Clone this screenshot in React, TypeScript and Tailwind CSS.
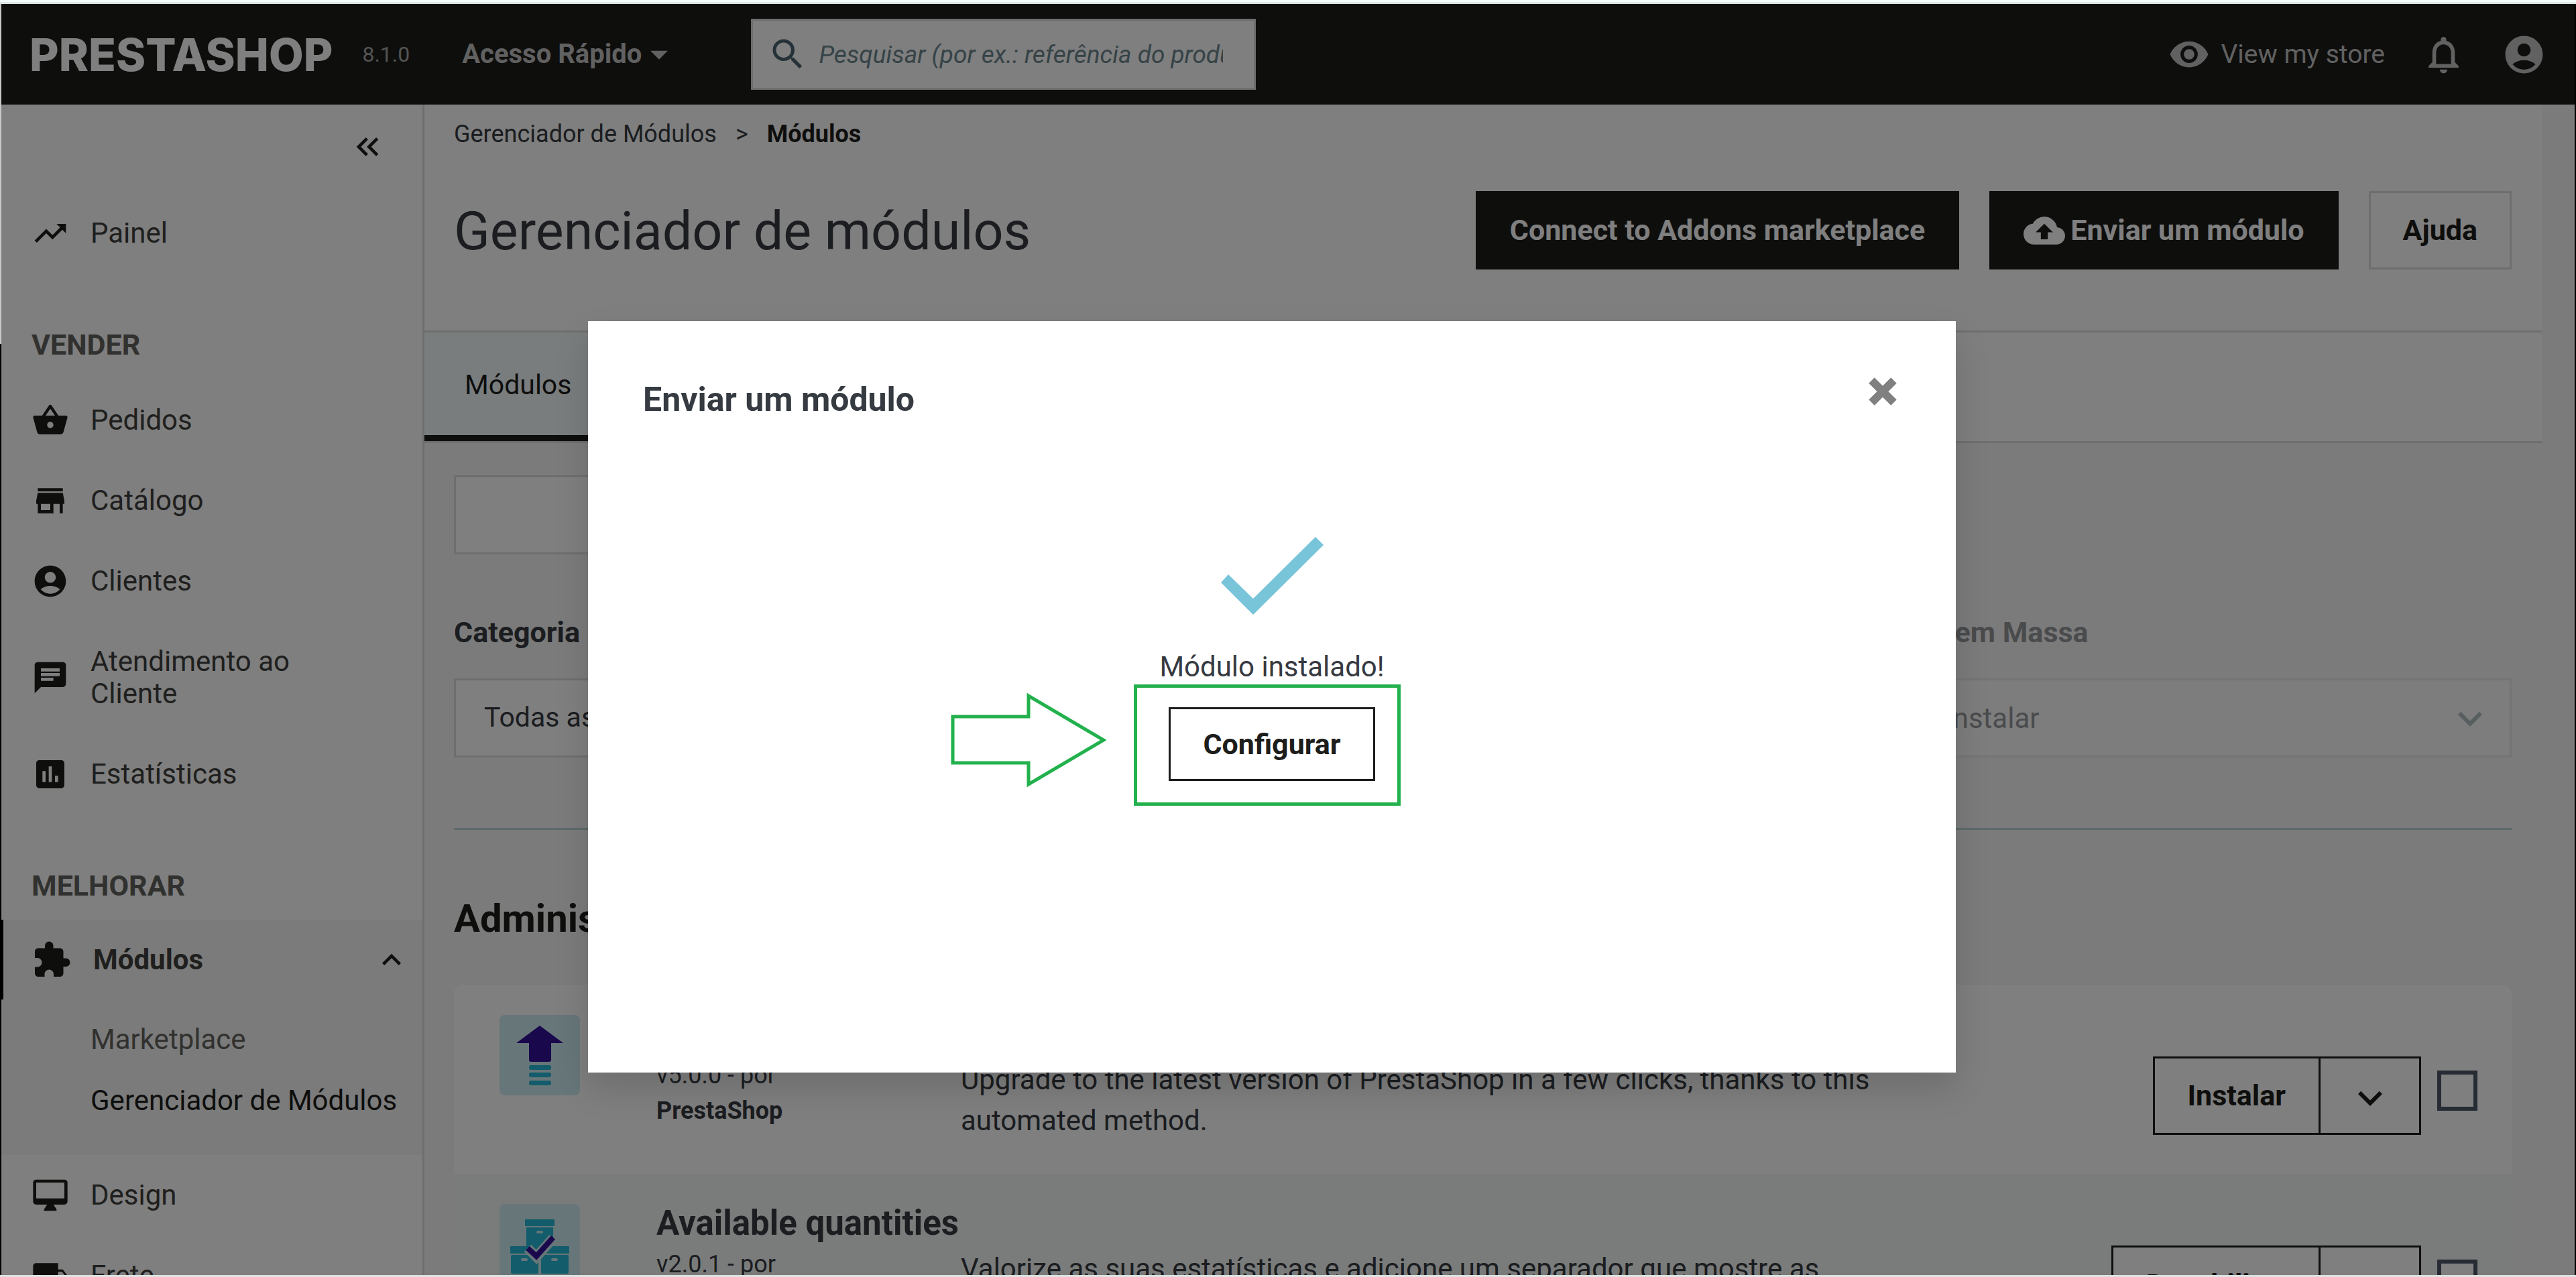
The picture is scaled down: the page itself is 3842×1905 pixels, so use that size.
import type { ReactNode } from "react";
import {
  MdAccountCircle,
  MdArrowDropDown,
  MdAssessment,
  MdChat,
  MdCloudUpload,
  MdExtension,
  MdKeyboardArrowDown,
  MdKeyboardArrowUp,
  MdKeyboardDoubleArrowLeft,
  MdLocalShipping,
  MdNotificationsNone,
  MdSearch,
  MdShoppingBasket,
  MdStore,
  MdTrendingUp,
  MdVisibility,
} from "react-icons/md";

type IconComponent = (props: { className?: string }) => ReactNode;

function Header() {
  return (
    <header className="flex h-[150px] shrink-0 items-center bg-[#1d1d1b] pl-[42px] pr-[42px] text-[#c2c2c2]">
      <a href="#inicio" className="font-[Inter] text-[67px] leading-none font-extrabold text-white">
        PRESTASHOP
      </a>
      <span className="ml-[44px] text-[32px] text-[#a8a8a8]">8.1.0</span>
      <button className="ml-[78px] flex items-center text-[40px] font-bold">
        Acesso Rápido
        <MdArrowDropDown className="-ml-[5px] size-[62px]" />
      </button>
      <div className="ml-[106px] flex h-[106px] w-[753px] items-center border-[3px] border-[#dddddd] bg-white pl-[22px] pr-[46px]">
        <MdSearch className="size-[60px] shrink-0 text-[#4b6570]" />
        <input
          aria-label="Pesquisar"
          placeholder="Pesquisar (por ex.: referência do produto, nome do cliente...)"
          className="ml-[16px] h-full min-w-0 flex-1 text-[37px] italic outline-none placeholder:text-[#6c868e]"
        />
      </div>
      <a href="#loja" className="ml-auto flex items-center gap-[16px] text-[39px]">
        <MdVisibility className="size-[62px]" />
        View my store
      </a>
      <button aria-label="Notificações" className="ml-[54px]">
        <MdNotificationsNone className="size-[67px]" />
      </button>
      <button aria-label="Conta" className="ml-[53px]">
        <MdAccountCircle className="size-[67px]" />
      </button>
    </header>
  );
}

function DesktopIcon({ className }: { className?: string }) {
  return (
    <svg viewBox="0 0 24 24" fill="currentColor" className={className}>
      <path d="M21 2H3c-1.1 0-2 .9-2 2v12c0 1.1.9 2 2 2h7l-2 3v1h8v-1l-2-3h7c1.1 0 2-.9 2-2V4c0-1.1-.9-2-2-2zm0 12H3V4h18v10z" />
    </svg>
  );
}

function NavItem({ icon: Icon, children }: { icon: IconComponent; children: ReactNode }) {
  return (
    <a href="#menu" className="flex items-center gap-[32px] py-[36px] pr-[120px] pl-[45px] text-[42px] leading-[48px] text-[#3f3f3d]">
      <Icon className="-my-[4px] size-[56px] shrink-0 text-[#1d1d1b]" />
      <span>{children}</span>
    </a>
  );
}

function NavTitle({ children }: { children: ReactNode }) {
  return <h2 className="pl-[45px] text-[43px] leading-[48px] font-bold text-[#63635f]">{children}</h2>;
}

function Sidebar() {
  return (
    <nav className="w-[631px] shrink-0 border-r-[3px] border-[#dddddd] bg-white">
      <div className="flex justify-end pt-[35px] pr-[54px]">
        <button aria-label="Recolher menu">
          <MdKeyboardDoubleArrowLeft className="size-[56px] text-[#1d1d1b]" />
        </button>
      </div>
      <div className="mt-[41px]">
        <NavItem icon={MdTrendingUp}>Painel</NavItem>
      </div>
      <div className="mt-[82px] mb-[29px]">
        <NavTitle>VENDER</NavTitle>
      </div>
      <NavItem icon={MdShoppingBasket}>Pedidos</NavItem>
      <NavItem icon={MdStore}>Catálogo</NavItem>
      <NavItem icon={MdAccountCircle}>Clientes</NavItem>
      <NavItem icon={MdChat}>Atendimento ao Cliente</NavItem>
      <NavItem icon={MdAssessment}>Estatísticas</NavItem>
      <div className="mt-[82px] mb-[27px]">
        <NavTitle>MELHORAR</NavTitle>
      </div>
      <div className="bg-[#f6f6f6] pb-[36px]">
        <a
          href="#modulos"
          className="flex h-[119px] items-center border-l-[3px] border-black pr-[18px] pl-[42px] text-[42px] font-bold text-[#3f3f3d]"
        >
          <MdExtension className="mr-[32px] size-[60px] text-[#1d1d1b]" />
          Módulos
          <MdKeyboardArrowUp className="ml-auto size-[56px] text-[#1d1d1b]" />
        </a>
        <a href="#marketplace" className="mt-[14px] block pl-[133px] text-[42px] leading-[91px] text-[#63635f]">
          Marketplace
        </a>
        <a href="#gerenciador" className="block pl-[133px] text-[42px] leading-[91px] whitespace-nowrap text-[#1d1d1b]">
          Gerenciador de Módulos
        </a>
      </div>
      <NavItem icon={DesktopIcon}>Design</NavItem>
      <NavItem icon={MdLocalShipping}>Frete</NavItem>
    </nav>
  );
}

function PageHeader() {
  return (
    <div className="mr-[49px] border-b-[3px] border-[#dddddd] bg-white text-[#363a41]">
      <div className="border-b-[3px] border-[#dddddd] pr-[45px] pb-[91px] pl-[44px]">
        <ol className="flex gap-[28px] pt-[20px] text-[36px] leading-[48px]">
          <li>
            <a href="#gerenciador">Gerenciador de Módulos</a>
          </li>
          <li aria-hidden="true">&gt;</li>
          <li className="font-bold text-[#1d1d1b]">Módulos</li>
        </ol>
        <div className="mt-[61px] flex items-center gap-[45px]">
          <h1 className="mr-auto pt-[3px] text-[79px] leading-[114px]">Gerenciador de módulos</h1>
          <button className="h-[117px] bg-[#1d1d1b] px-[51px] text-[43px] font-bold text-white">
            Connect to Addons marketplace
          </button>
          <button className="flex h-[117px] items-center gap-[8px] bg-[#1d1d1b] px-[51px] text-[43px] font-bold text-white">
            <MdCloudUpload className="size-[62px]" />
            Enviar um módulo
          </button>
          <button className="h-[117px] border-[3px] border-[#dddddd] px-[48px] text-[43px] font-bold text-[#1d1d1b]">
            Ajuda
          </button>
        </div>
      </div>
      <div className="flex">
        <a href="#modulos" className="h-[162px] border-b-[9px] border-[#1d1d1b] bg-[#f3fbfd] px-[60px] text-[41px] leading-[156px] text-[#1d1d1b]">
          Módulos
        </a>
      </div>
    </div>
  );
}

function UpgradeIcon() {
  return (
    <svg viewBox="0 0 120 120" className="size-[120px]">
      <rect width="120" height="120" rx="8" fill="#ceecf3" />
      <path d="M60 16 95 42H77V67q0 3-3 3H47q-3 0-3-3V42H25z" fill="#34119b" />
      <g fill="#25b9d7">
        <rect x="44" y="75" width="33" height="7" rx="3" />
        <rect x="44" y="86" width="33" height="7" rx="3" />
        <rect x="44" y="98" width="33" height="7" rx="3" />
      </g>
    </svg>
  );
}

function QuantitiesIcon() {
  return (
    <svg viewBox="0 0 120 120" className="size-[120px]">
      <rect width="120" height="120" rx="8" fill="#ceecf3" />
      <g fill="#25b9d7">
        <rect x="38" y="23" width="44" height="10" rx="1" />
        <path d="M40 35h40v28H40z" />
        <rect x="16" y="63" width="88" height="11" rx="1" />
        <rect x="17" y="76" width="41" height="28" rx="2" />
        <rect x="62" y="76" width="41" height="28" rx="2" />
      </g>
      <g fill="#ceecf3">
        <rect x="55" y="40" width="10" height="4" rx="2" />
        <rect x="32" y="81" width="10" height="4" rx="2" />
        <rect x="77" y="81" width="10" height="4" rx="2" />
      </g>
      <path d="m42 66 13 13 25-28" fill="none" stroke="#ceecf3" strokeWidth="15" />
      <path d="m42 66 13 12 25-28" fill="none" stroke="#34119b" strokeWidth="8" />
    </svg>
  );
}

interface ModuleProps {
  icon: ReactNode;
  name: string;
  version: string;
  description: ReactNode;
  action: string;
  tone: string;
}

function ModuleCard({ icon, name, version, description, action, tone }: ModuleProps) {
  return (
    <article className={`flex h-[282px] items-start pr-[51px] pl-[68px] text-[#363a41] ${tone}`}>
      <div className="mt-[45px] mr-[114px] shrink-0">{icon}</div>
      <div className="w-[454px] shrink-0 pt-[44px]">
        <h3 className="text-[51px] leading-[60px] font-bold whitespace-nowrap">{name}</h3>
        <p className="mt-[5px] text-[36px] leading-[53px]">
          {version} - por
          <br />
          <b>PrestaShop</b>
        </p>
      </div>
      <p className="w-[1420px] pt-[111px] text-[42px] leading-[61px]">{description}</p>
      <div className="mt-[107px] ml-auto flex h-[117px] border-[3px] border-[#1d1d1b] bg-white text-[#1d1d1b]">
        <button className="border-r-[3px] border-[#1d1d1b] px-[49px] text-[43px] font-bold">{action}</button>
        <button aria-label={`Mais ações de ${name}`} className="w-[147px]">
          <MdKeyboardArrowDown className="mx-auto mt-[6px] size-[72px]" />
        </button>
      </div>
      <input
        type="checkbox"
        aria-label={`Selecionar ${name}`}
        className="mt-[128px] ml-[24px] size-[60px] shrink-0 appearance-none border-[6px] border-[#4e5666] bg-white"
      />
    </article>
  );
}

function Content() {
  return (
    <div className="pr-[94px] pl-[44px] text-[#363a41]">
      <input
        aria-label="Pesquisar módulos"
        className="mt-[48px] block h-[118px] w-2/3 border-[3px] border-[#dddddd] bg-white px-[46px] text-[41px]"
      />
      <div className="mt-[85px] flex">
        <div className="flex-1">
          <label htmlFor="categoria" className="block text-[43px] leading-[62px] font-bold">
            Categoria
          </label>
          <select
            id="categoria"
            className="mt-[38px] block h-[118px] w-[900px] appearance-none border-[3px] border-[#dddddd] bg-white px-[42px] text-[41px]"
          >
            <option>Todas as categorias</option>
          </select>
        </div>
        <div className="w-[962px] opacity-50">
          <label htmlFor="massa" className="block text-[43px] leading-[62px] font-bold">
            Ações em Massa
          </label>
          <div className="relative mt-[38px]">
            <select
              id="massa"
              disabled
              className="block h-[118px] w-full appearance-none border-[3px] border-[#dddddd] bg-white px-[44px] text-[42px] opacity-100"
            >
              <option>Desinstalar</option>
            </select>
            <MdKeyboardArrowDown className="pointer-events-none absolute top-[24px] right-[26px] size-[72px] text-[#6c868e]" />
          </div>
        </div>
      </div>
      <div role="separator" className="mt-[105px] h-[3px] bg-[#bad4d6]" />
      <h2 className="mt-[92px] text-[58px] leading-[80px] font-bold text-[#1d1d1b]">Administração</h2>
      <div className="mt-[59px] overflow-hidden rounded-t-[14px]">
        <ModuleCard
          icon={<UpgradeIcon />}
          name="1-Click Upgrade"
          version="v5.0.0"
          description="Upgrade to the latest version of PrestaShop in a few clicks, thanks to this automated method."
          action="Instalar"
          tone="bg-white"
        />
        <ModuleCard
          icon={<QuantitiesIcon />}
          name="Available quantities"
          version="v2.0.1"
          description="Valorize as suas estatísticas e adicione um separador que mostre as quantidades disponíveis para venda."
          action="Desabilitar"
          tone="bg-[#f4f8f7]"
        />
      </div>
    </div>
  );
}

function UploadDialog() {
  return (
    <div className="absolute inset-0 flex items-start justify-center bg-black/50 pt-[473px] pr-[48px]">
      <div
        role="dialog"
        aria-labelledby="upload-title"
        className="h-[1121px] w-[2040px] max-w-full bg-white text-[#363a41] shadow-[0_24px_48px_rgba(0,0,0,0.14)]"
      >
        <div className="flex items-start justify-between px-[82px] pt-[84px]">
          <h2 id="upload-title" className="text-[50px] leading-[66px] font-bold">
            Enviar um módulo
          </h2>
          <button aria-label="Fechar" className="mr-[6px]">
            <svg viewBox="0 0 42 42" className="size-[42px]" stroke="#808080" strokeWidth="12">
              <path d="M4.5 4.5l33 33M37.5 4.5l-33 33" />
            </svg>
          </button>
        </div>
        <div className="mt-[172px] flex flex-col items-center">
          <svg viewBox="0 0 153 116" className="h-[116px] w-[153px]">
            <path d="M0 68 11 56 48 92 141 0l12 12L48 116z" fill="#78c4d9" />
          </svg>
          <p className="mt-[52px] text-[42px] leading-[52px]">Módulo instalado!</p>
          <div className="relative mr-[14px] border-[5px] border-[#22b14c] pt-[29px] pr-[33px] pb-[32px] pl-[47px]">
            <button className="h-[110px] border-[3px] border-[#1d1d1b] px-[48px] text-[43px] font-bold text-[#1d1d1b]">
              Configurar
            </button>
            <svg viewBox="0 0 232 140" className="absolute top-[8px] right-full mr-[46px] h-[140px] w-[232px]">
              <path d="M3 35H116V4L228 70 116 136V104H3z" fill="none" stroke="#22b14c" strokeWidth="5" />
            </svg>
          </div>
        </div>
      </div>
    </div>
  );
}

export default function App() {
  return (
    <div className="flex h-screen flex-col overflow-hidden font-[Roboto,sans-serif]">
      <div className="h-[6px] shrink-0 border-b-[3px] border-[#dbe5e4] bg-[#f4fbfa]" />
      <div className="flex min-h-0 flex-1 border-b-[3px] border-[#e0e0e0]">
        <div className="flex w-[2px] shrink-0 flex-col bg-black">
          <div className="h-[507px] bg-[#c8c8c8]" />
        </div>
        <div className="relative flex min-w-0 flex-1 flex-col overflow-hidden">
          <Header />
          <div className="flex min-h-0 flex-1">
            <Sidebar />
            <main className="min-w-0 flex-1 bg-[#f6f6f6]">
              <PageHeader />
              <Content />
            </main>
          </div>
          <UploadDialog />
        </div>
        <div className="w-[2px] shrink-0 bg-black" />
      </div>
    </div>
  );
}
